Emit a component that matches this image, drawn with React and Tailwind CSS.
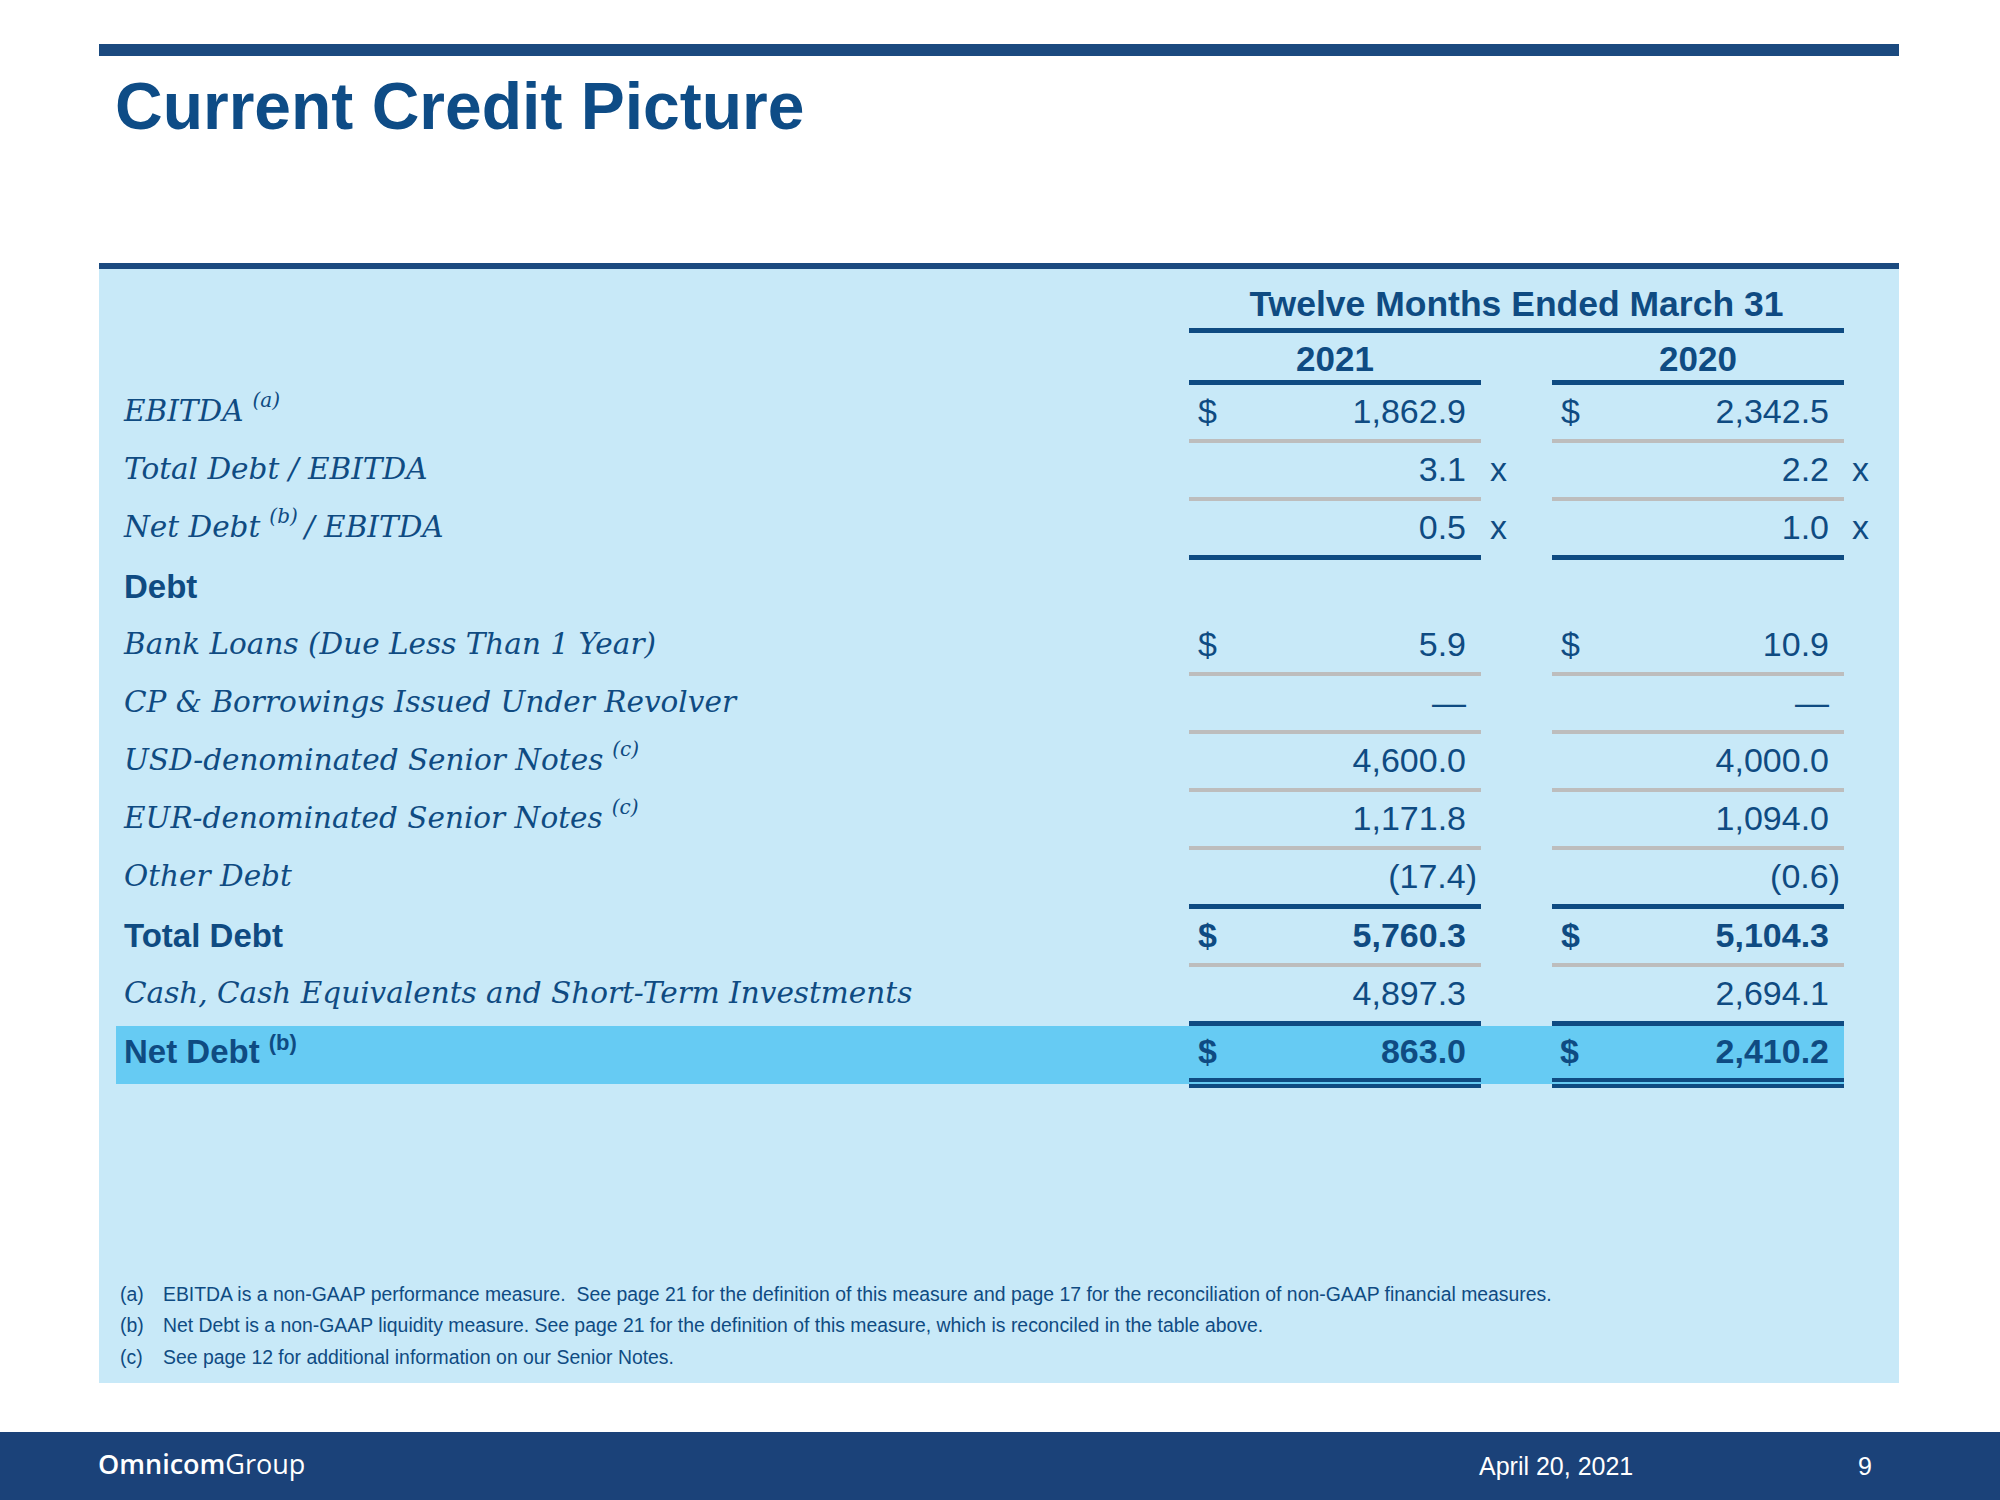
import React from "react";

function Sup({ children, bold }) {
  return (
    <span
      className={
        bold
          ? "relative -top-[13px] ml-[9px] text-[22px] leading-none"
          : "relative -top-[14px] ml-[9px] text-[20px] leading-none"
      }
    >
      {children}
    </span>
  );
}

function ValCell({ dollar, value, bold, neg, line }) {
  return (
    <div className="w-[292px] flex flex-col">
      <div
        className={`h-[54px] flex items-center justify-between pl-[9px] pr-[15px] text-[34px] ${
          bold ? "font-bold" : ""
        }`}
      >
        <span>{dollar ? "$" : ""}</span>
        <span className="whitespace-nowrap">
          {value}
          {neg && <span className="mr-[-11px]">)</span>}
        </span>
      </div>
      {line === "gray" && <div className="h-[4px] bg-[#bdbdbd]" />}
      {line === "blue" && <div className="h-[5px] bg-[#0f4b82]" />}
      {line === "none" && <div className="h-[4px]" />}
    </div>
  );
}

function Row({ label, labelBold, v1, v2, dollar, x, line, bold, neg }) {
  return (
    <div className="flex">
      <div
        className={`w-[1073px] h-[54px] flex items-center pl-2 whitespace-nowrap ${
          labelBold
            ? "font-['Liberation_Sans',Arial,sans-serif] font-bold text-[33px]"
            : "font-['DejaVu_Serif',Georgia,serif] italic text-[29.5px]"
        }`}
      >
        <span>{label}</span>
      </div>
      <ValCell dollar={dollar} value={v1} bold={bold} neg={neg} line={line} />
      <div className="w-[71px] h-[54px] flex items-center pl-[9px] text-[34px]">
        {x ? "x" : ""}
      </div>
      <ValCell dollar={dollar} value={v2} bold={bold} neg={neg} line={line} />
      <div className="h-[54px] flex items-center pl-[8px] text-[34px]">
        {x ? "x" : ""}
      </div>
    </div>
  );
}

export default function App() {
  const rows = [
    {
      label: (
        <>
          EBITDA<Sup>(a)</Sup>
        </>
      ),
      v1: "1,862.9",
      v2: "2,342.5",
      dollar: true,
      line: "gray",
    },
    { label: "Total Debt / EBITDA", v1: "3.1", v2: "2.2", x: true, line: "gray" },
    {
      label: (
        <>
          Net Debt<Sup>(b)</Sup>
          <span className="ml-[7px]">/ EBITDA</span>
        </>
      ),
      v1: "0.5",
      v2: "1.0",
      x: true,
      line: "blue",
    },
    { label: "Debt", labelBold: true, v1: "", v2: "", line: "none" },
    {
      label: "Bank Loans (Due Less Than 1 Year)",
      v1: "5.9",
      v2: "10.9",
      dollar: true,
      line: "gray",
    },
    { label: "CP & Borrowings Issued Under Revolver", v1: "—", v2: "—", line: "gray" },
    {
      label: (
        <>
          USD-denominated Senior Notes<Sup>(c)</Sup>
        </>
      ),
      v1: "4,600.0",
      v2: "4,000.0",
      line: "gray",
    },
    {
      label: (
        <>
          EUR-denominated Senior Notes<Sup>(c)</Sup>
        </>
      ),
      v1: "1,171.8",
      v2: "1,094.0",
      line: "gray",
    },
    { label: "Other Debt", v1: "(17.4", v2: "(0.6", neg: true, line: "blue" },
    {
      label: "Total Debt",
      labelBold: true,
      v1: "5,760.3",
      v2: "5,104.3",
      dollar: true,
      bold: true,
      line: "gray",
    },
    {
      label: "Cash, Cash Equivalents and Short-Term Investments",
      v1: "4,897.3",
      v2: "2,694.1",
      line: "blue",
    },
  ];

  return (
    <div className="w-[2000px] h-[1500px] bg-white flex flex-col font-['Liberation_Sans',Arial,sans-serif] text-[#0f4b82] overflow-hidden">
      {/* top bar */}
      <div className="mt-[44px] ml-[99px] w-[1800px] h-[12px] bg-[#1b4a7f]" />
      {/* title */}
      <div className="mt-[17px] ml-[115px] text-[66px] leading-none font-bold text-[#0e4c86] whitespace-nowrap">
        Current Credit Picture
      </div>

      {/* panel */}
      <div className="mt-[124px] ml-[99px] w-[1800px] h-[1120px] border-t-[6px] border-[#1b4a7f] bg-[#c8e9f8] flex flex-col">
        <div className="ml-[17px] flex flex-col">
          {/* header */}
          <div className="flex pt-[18px]">
            <div className="w-[1073px]" />
            <div className="w-[655px] text-center text-[35.5px] font-bold leading-none pb-[5px] border-b-[5px] border-[#0f4b82] whitespace-nowrap">
              Twelve Months Ended March 31
            </div>
          </div>
          <div className="flex mt-[8px]">
            <div className="w-[1073px]" />
            <div className="w-[292px] text-center text-[35px] font-bold leading-none pb-[4px] border-b-[5px] border-[#0f4b82]">
              2021
            </div>
            <div className="w-[71px]" />
            <div className="w-[292px] text-center text-[35px] font-bold leading-none pb-[4px] border-b-[5px] border-[#0f4b82]">
              2020
            </div>
          </div>

          {rows.map((r, i) => (
            <Row key={i} {...r} />
          ))}

          {/* Net Debt highlighted row */}
          <div className="flex w-[1728px] bg-[#66cbf3]">
            <div className="w-[1073px] h-[52px] flex items-center pl-2 font-bold text-[33px] whitespace-nowrap">
              <span>
                Net Debt<Sup bold>(b)</Sup>
              </span>
            </div>
            <div className="w-[292px] flex flex-col">
              <div className="h-[52px] flex items-center justify-between pl-[9px] pr-[15px] text-[34px] font-bold">
                <span>$</span>
                <span>863.0</span>
              </div>
              <div className="h-[4px] bg-[#0f4b82]" />
              <div className="h-[2px]" />
            </div>
            <div className="w-[71px]" />
            <div className="w-[292px] flex flex-col">
              <div className="h-[52px] flex items-center justify-between pl-[8px] pr-[15px] text-[34px] font-bold">
                <span>$</span>
                <span>2,410.2</span>
              </div>
              <div className="h-[4px] bg-[#0f4b82]" />
              <div className="h-[2px]" />
            </div>
          </div>
          <div className="flex">
            <div className="w-[1073px]" />
            <div className="w-[292px] h-[4px] bg-[#0f4b82]" />
            <div className="w-[71px]" />
            <div className="w-[292px] h-[4px] bg-[#0f4b82]" />
          </div>
        </div>

        {/* footnotes */}
        <div className="mt-auto pb-[10px] pl-[21px] text-[19.4px] leading-[31.5px] text-[#0f4b82]">
          <div className="flex whitespace-nowrap">
            <span className="w-[43px]">(a)</span>
            <span>
              EBITDA is a non-GAAP performance measure.&nbsp; See page 21 for the definition of this measure and page 17 for the reconciliation of non-GAAP financial measures.
            </span>
          </div>
          <div className="flex whitespace-nowrap">
            <span className="w-[43px]">(b)</span>
            <span>
              Net Debt is a non-GAAP liquidity measure. See page 21 for the definition of this measure, which is reconciled in the table above.
            </span>
          </div>
          <div className="flex whitespace-nowrap">
            <span className="w-[43px]">(c)</span>
            <span>See page 12 for additional information on our Senior Notes.</span>
          </div>
        </div>
      </div>

      {/* footer */}
      <div className="mt-[49px] h-[68px] bg-[#1b4279] flex items-center text-white">
        <div className="ml-[98px] w-[1381px] pb-[5px] font-['Open_Sans',sans-serif] text-[27px] leading-none whitespace-nowrap">
          <span className="font-semibold">Omnicom</span>
          <span className="font-normal">Group</span>
        </div>
        <div className="w-[379px] text-[25px] leading-none whitespace-nowrap">April 20, 2021</div>
        <div className="text-[25px] leading-none">9</div>
      </div>
    </div>
  );
}
